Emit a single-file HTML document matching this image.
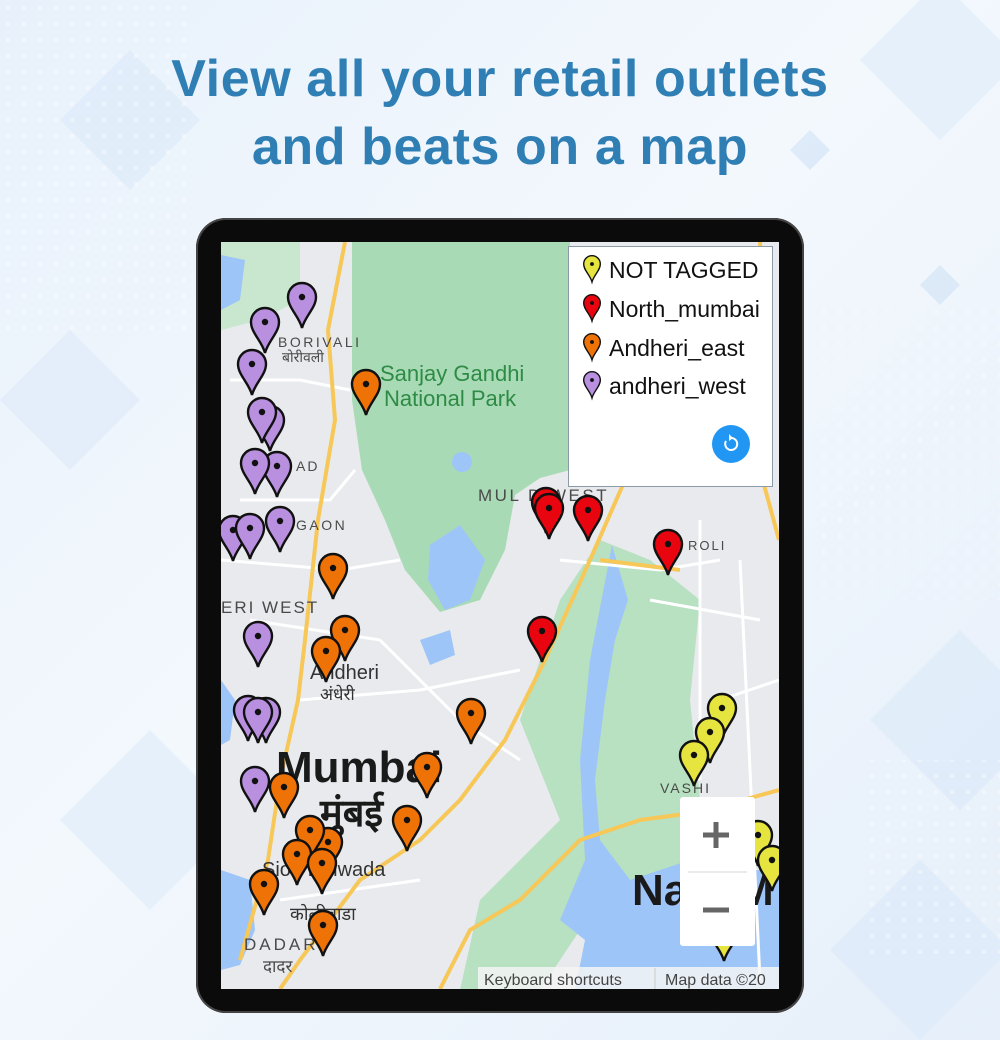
<!DOCTYPE html>
<html><head><meta charset="utf-8"><style>
html,body{margin:0;padding:0}
body{width:1000px;height:1040px;position:relative;overflow:hidden;background:linear-gradient(135deg,#e8f1fb 0%,#f3f8fd 45%,#e6effa 100%);font-family:"Liberation Sans",sans-serif}
.t{position:absolute;left:0;width:1000px;text-align:center;color:#2f7fb5;font-weight:bold;font-size:52px;letter-spacing:0.6px;line-height:1}
.tab{position:absolute;left:196px;top:218px;width:608px;height:795px;background:#0b0b0b;border-radius:30px;box-shadow:0 0 0 2px #444 inset}
.scr{position:absolute;left:221px;top:242px;width:558px;height:747px;overflow:hidden;background:#e8eaed}
</style></head><body>
<svg width="1000" height="1040" style="position:absolute;left:0;top:0">
<defs><pattern id="dots" width="16" height="16" patternUnits="userSpaceOnUse"><circle cx="8" cy="8" r="2.2" fill="#fff" opacity=".8"/></pattern></defs>
<g fill="#d6e6f8" opacity=".45">
<polygon points="60,120 130,50 200,120 130,190"/>
<polygon points="0,400 70,330 140,400 70,470"/>
<polygon points="860,60 940,-20 1020,60 940,140"/>
<polygon points="870,720 960,630 1050,720 960,810"/>
<polygon points="830,950 920,860 1010,950 920,1040"/>
<polygon points="60,820 150,730 240,820 150,910"/>
<polygon points="790,150 810,130 830,150 810,170" fill="#c5dcf5"/>
<polygon points="920,285 940,265 960,285 940,305" fill="#c5dcf5"/>
</g>
<rect x="0" y="0" width="190" height="340" fill="url(#dots)" opacity=".5"/>
<rect x="820" y="300" width="180" height="300" fill="url(#dots)" opacity=".35"/>
<rect x="860" y="760" width="140" height="200" fill="url(#dots)" opacity=".45"/>
</svg>
<div class="t" style="top:53px">View all your retail outlets</div>
<div class="t" style="top:121px">and beats on a map</div>
<div class="tab"></div>
<div class="scr">
<svg width="558" height="747" viewBox="221 242 558 747" style="position:absolute;left:0;top:0">
<rect x="221" y="242" width="558" height="747" fill="#e8eaed"/>
<path d="M352,242 L570,242 L570,470 L540,478 L515,495 L505,550 L480,600 L440,612 L405,570 L385,520 L362,470 L352,400 Z" fill="#a8dab5"/>
<path d="M520,720 L560,600 L600,540 L650,560 L700,600 L690,700 L700,800 L680,870 L600,900 L540,990 L460,990 L480,900 L520,860 L560,820 Z" fill="#b7e1c1"/>
<path d="M221,242 L300,242 L300,300 L260,320 L221,330 Z" fill="#c9e7cf"/>
<path d="M612,545 L628,600 L615,640 L605,700 L595,780 L600,840 L630,880 L690,860 L700,990 L575,990 L585,940 L560,920 L585,860 L580,760 L590,660 Z" fill="#9ec5f8"/>
<path d="M690,870 L779,870 L779,989 L700,989 Z" fill="#9ec5f8"/>
<path d="M430,545 L460,525 L485,560 L470,600 L445,610 L428,580 Z" fill="#9ec5f8"/>
<circle cx="462" cy="462" r="10" fill="#9ec5f8"/>
<path d="M420,640 L450,630 L455,655 L430,665 Z" fill="#9ec5f8"/>
<path d="M221,870 L250,880 L255,930 L240,965 L221,970 Z" fill="#9ec5f8"/>
<path d="M221,255 L245,260 L240,300 L221,310 Z" fill="#9ec5f8"/>
<path d="M221,680 L235,700 L230,740 L221,745 Z" fill="#9ec5f8"/>
<g stroke="#fff" stroke-width="3" fill="none">
<path d="M230,380 L300,380 L350,390"/><path d="M240,500 L330,500 L355,470"/><path d="M221,560 L340,570 L400,560"/>
<path d="M560,560 L660,570 L720,560"/><path d="M700,520 L700,780"/><path d="M300,700 L420,690 L520,670"/>
<path d="M380,640 L460,720 L520,760"/><path d="M250,620 L380,640"/><path d="M650,600 L760,620"/>
<path d="M720,700 L779,680"/><path d="M740,560 L760,980"/><path d="M280,900 L420,880"/>
</g>
<g stroke="#f7c757" stroke-width="4" fill="none">
<path d="M345,242 L328,330 L335,420 L318,520 L305,640 L298,700 L280,780 L268,860 L240,960"/>
<path d="M625,480 L590,560 L545,660 L505,740 L460,800 L420,840 L360,880 L300,960 L280,989"/>
<path d="M440,989 L470,930 L520,900 L540,880 L560,860 L580,840 L640,820 L700,812 L779,790"/>
<path d="M760,242 L770,400 L760,470 L779,540"/>
<path d="M600,560 L680,570"/>
</g>
<g font-family="Liberation Sans,sans-serif" fill="#4a4a4a">
<text x="278" y="347" font-size="14" letter-spacing="2.5">BORIVALI</text>
<text x="282" y="362" font-size="14" font-family="Noto Sans CJK SC,sans-serif">बोरीवली</text>
<text x="296" y="471" font-size="14" letter-spacing="2">AD</text>
<text x="296" y="530" font-size="14" letter-spacing="2.5">GAON</text>
<text x="221" y="613" font-size="17" letter-spacing="2">ERI WEST</text>
<text x="478" y="501" font-size="17" letter-spacing="2.5">MUL D WEST</text>
<text x="688" y="550" font-size="13" letter-spacing="2">ROLI</text>
<text x="310" y="679" font-size="20" fill="#333">Andheri</text>
<text x="320" y="700" font-size="17" fill="#333" font-family="Noto Sans CJK SC,sans-serif">अंधेरी</text>
<text x="276" y="782" font-size="44" fill="#1a1a1a" font-weight="bold">Mumbai</text>
<text x="320" y="826" font-size="38" fill="#1a1a1a" font-weight="bold" font-family="Noto Sans CJK SC,sans-serif">मुंबई</text>
<text x="262" y="876" font-size="20" fill="#333">Sion Dhiwada</text>
<text x="290" y="920" font-size="18" fill="#333" font-family="Noto Sans CJK SC,sans-serif">कोळीवाडा</text>
<text x="244" y="950" font-size="17" letter-spacing="3">DADAR</text>
<text x="263" y="972" font-size="17" font-family="Noto Sans CJK SC,sans-serif">दादर</text>
<text x="660" y="793" font-size="14" letter-spacing="2">VASHI</text>
<text x="632" y="905" font-size="44" fill="#1a1a1a" font-weight="bold">Navi M</text>
<text x="380" y="381" font-size="22" fill="#2e8b46">Sanjay Gandhi</text>
<text x="384" y="406" font-size="22" fill="#2e8b46">National Park</text>
</g>
<defs><g id="p"><path d="M0,31 C-3,19 -14,11 -14,0 A14,14 0 1 1 14,0 C14,11 3,19 0,31 Z" stroke="#111" stroke-width="2.4"/><circle r="3.2" fill="#111"/></g>
<g id="q"><path d="M0,28 C-3,17 -13,10 -13,0 A13,13 0 1 1 13,0 C13,10 3,17 0,28 Z" stroke="#111" stroke-width="2.2"/><circle r="3" fill="#111"/></g></defs>
<g fill="#b98fe0">
<use href="#p" x="302" y="297"/><use href="#p" x="265" y="322"/><use href="#p" x="252" y="364"/><use href="#p" x="270" y="420"/><use href="#p" x="262" y="412"/><use href="#p" x="277" y="466"/><use href="#p" x="255" y="463"/><use href="#p" x="233" y="530"/><use href="#p" x="250" y="528"/><use href="#p" x="280" y="521"/><use href="#p" x="258" y="636"/><use href="#p" x="266" y="712"/><use href="#p" x="248" y="710"/><use href="#p" x="258" y="712"/><use href="#p" x="255" y="781"/>
</g>
<g fill="#ee7206">
<use href="#p" x="366" y="384"/><use href="#p" x="333" y="568"/><use href="#p" x="345" y="630"/><use href="#p" x="326" y="651"/><use href="#p" x="471" y="713"/><use href="#p" x="427" y="767"/><use href="#p" x="407" y="820"/><use href="#p" x="284" y="787"/><use href="#p" x="328" y="842"/><use href="#p" x="310" y="830"/><use href="#p" x="297" y="854"/><use href="#p" x="322" y="863"/><use href="#p" x="264" y="884"/><use href="#p" x="323" y="925"/>
</g>
<g fill="#e8050f">
<use href="#p" x="546" y="502"/><use href="#p" x="549" y="508"/><use href="#p" x="588" y="510"/><use href="#p" x="668" y="544"/><use href="#p" x="542" y="631"/>
</g>
<g fill="#e6e53f">
<use href="#p" x="722" y="708"/><use href="#p" x="710" y="732"/><use href="#p" x="694" y="755"/><use href="#p" x="758" y="835"/><use href="#p" x="772" y="860"/><use href="#p" x="724" y="930"/>
</g>
<rect x="568.5" y="246.5" width="204" height="240" fill="#fff" stroke="#8a9aa8"/>
<g font-size="23" fill="#111" font-family="Liberation Sans,sans-serif">
<text x="609" y="278">NOT TAGGED</text><text x="609" y="317">North_mumbai</text><text x="609" y="356">Andheri_east</text><text x="609" y="394">andheri_west</text>
</g>
<g transform="translate(592,264) scale(.64)"><use href="#q" fill="#e6e53f"/></g>
<g transform="translate(592,303) scale(.64)"><use href="#q" fill="#e8050f"/></g>
<g transform="translate(592,342) scale(.64)"><use href="#q" fill="#ee7206"/></g>
<g transform="translate(592,380) scale(.64)"><use href="#q" fill="#b98fe0"/></g>
<circle cx="731" cy="444" r="19" fill="#2196f3"/>
<path d="M726,441 A6,6 0 1 0 731,438" stroke="#fff" stroke-width="2" fill="none"/><path d="M729,434 L733,438 L729,441 Z" fill="#fff"/>
<rect x="680" y="797" width="75" height="149" rx="3" fill="#fff"/>
<line x1="688" y1="872" x2="747" y2="872" stroke="#e3e3e3" stroke-width="1.5"/>
<path d="M703,835 H729 M716,822 V848" stroke="#666" stroke-width="5"/>
<path d="M703,910 H729" stroke="#666" stroke-width="5"/>
<rect x="478" y="967" width="301" height="22" fill="#f5f5f5" opacity=".85"/>
<line x1="655" y1="968" x2="655" y2="989" stroke="#ccc"/>
<text x="484" y="985" font-size="16" fill="#444" font-family="Liberation Sans,sans-serif">Keyboard shortcuts</text>
<text x="665" y="985" font-size="16" fill="#444" font-family="Liberation Sans,sans-serif">Map data ©20</text>
</svg>
</div>
</body></html>
